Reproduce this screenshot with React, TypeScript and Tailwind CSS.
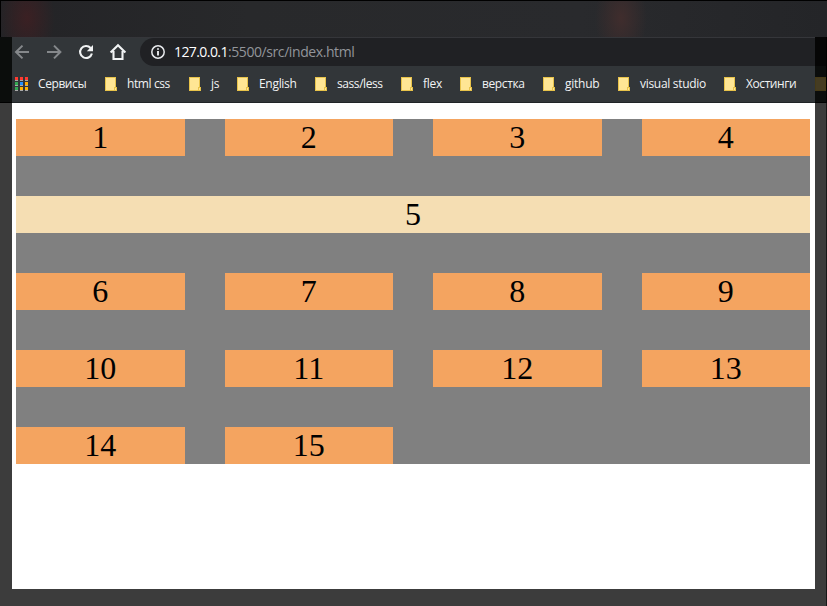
import React from "react";

type Bookmark = { label: string; box: string; text: string };

const bookmarks: Bookmark[] = [
  { label: "html css", box: "w-[84px]", text: "tracking-[-0.4px]" },
  { label: "js", box: "w-12", text: "tracking-[-0.3px]" },
  { label: "English", box: "w-[78px]", text: "tracking-[-0.3px]" },
  { label: "sass/less", box: "w-[86px]", text: "tracking-[-0.42px]" },
  { label: "flex", box: "w-[59px]", text: "tracking-[-0.3px]" },
  { label: "верстка", box: "w-[83px]", text: "tracking-[-0.38px]" },
  { label: "github", box: "w-[75px]", text: "tracking-[-0.25px]" },
  { label: "visual studio", box: "w-[106px]", text: "tracking-[-0.3px]" },
  { label: "Хостинги", box: "w-[91px]", text: "tracking-[-0.42px]" },
];

const appColors = [
  "#ff3b30", "#ff3b30", "#ff3b30",
  "#34a853", "#2090ff", "#ffab00",
  "#34a853", "#ffb300", "#ffb300",
];

function Folder() {
  return (
    <svg width="12" height="14" viewBox="0 0 12 14" className="shrink-0" shapeRendering="crispEdges">
      <path d="M0 0h11v10h1v4H0z" fill="#e8c34a" />
      <path d="M1 1h9v9H9v3H1z" fill="#ffe694" />
      <path d="M10 11h1v2h-1z" fill="#ffe694" />
    </svg>
  );
}

function AppsIcon() {
  return (
    <svg width="13" height="14" viewBox="0 0 13 14" className="shrink-0" shapeRendering="crispEdges">
      {appColors.map((c, i) => {
        const x = (i % 3) * 5;
        const y = Math.floor(i / 3) * 5;
        return (
          <g key={i}>
            <rect x={x} y={y} width="3" height="3" fill={c} />
            <rect x={x} y={y + 3} width="3" height="1" fill="#a9a9a9" />
          </g>
        );
      })}
    </svg>
  );
}

function Toolbar() {
  return (
    <div className="flex h-[28px] items-center">
      <svg width="128" height="28" viewBox="0 0 128 28" fill="none" className="shrink-0">
        <path d="M17 14H4.5M10.5 7.6L4 14L10.5 20.4" stroke="#85888b" strokeWidth="2" />
        <path d="M35 14H48M42 7.6L48.4 14L42 20.4" stroke="#85888b" strokeWidth="2" />
        <path d="M78.6 10A6 6 0 1 0 79.9 15.5" stroke="#f1f3f4" strokeWidth="2.1" />
        <path d="M81 7v6.2h-6.2z" fill="#f1f3f4" />
        <path d="M98.6 14.6L106 7.2L113.4 14.6M101.5 13V21H110.5V13" stroke="#f1f3f4" strokeWidth="2.1" />
      </svg>
      <div className="flex h-[28px] flex-1 items-center rounded-l-full bg-[#202124] pl-[11px]">
        <svg width="14" height="14" viewBox="0 0 14 14" fill="none" className="shrink-0">
          <circle cx="7" cy="7" r="6.2" stroke="#e8eaed" strokeWidth="1.5" />
          <path d="M7 6v4.5M7 3.2v1.6" stroke="#e8eaed" strokeWidth="1.9" />
        </svg>
        <span className="ml-[9px] w-[54px] whitespace-nowrap text-[14px] leading-5 tracking-[-0.58px] text-white">127.0.0.1</span>
        <span className="whitespace-nowrap text-[14px] leading-5 tracking-[-0.42px] text-[#92959a]">:5500/src/index.html</span>
      </div>
    </div>
  );
}

export default function App() {
  return (
    <div className="h-[606px] w-[827px] overflow-hidden bg-[#3c3c3c] font-['Open_Sans','Noto_Sans',sans-serif]">
      <div className="h-[37px] border-t border-l border-black bg-[radial-gradient(ellipse_28px_44px_at_26px_17px,#3b2023,transparent),radial-gradient(ellipse_26px_44px_at_620px_17px,#402d2d,transparent),linear-gradient(90deg,#232326,#28292b_30%,#292a2d_70%,#242528)]" />
      <div className="flex h-[66px]">
        <div className="w-3 border-b border-black bg-[#0b0d0c]" />
        <div className="w-[803px] overflow-hidden border-t border-b border-t-[#35363a] border-b-[#202427] bg-[#323639]">
          <Toolbar />
          <div className="flex h-[36px] items-center pl-[3px] text-[12px] leading-4 text-[#f1f3f4]">
            <div className="flex w-[90px] shrink-0 items-center">
              <AppsIcon />
              <span className="ml-[10px] whitespace-nowrap tracking-[-0.42px]">Сервисы</span>
            </div>
            {bookmarks.map((b) => (
              <div key={b.label} className={`flex shrink-0 items-center ${b.box}`}>
                <Folder />
                <span className={`ml-[10px] whitespace-nowrap ${b.text}`}>{b.label}</span>
              </div>
            ))}
          </div>
        </div>
        <div className="flex w-3 items-end border-r border-b border-black bg-gradient-to-b from-[#060606] from-45% to-[#0b0d0c] to-45% pb-[11px]">
          <div className="h-[14px] w-[11px] border border-[#463a16] bg-[#453c22]" />
        </div>
      </div>
      <div className="flex h-[503px] border-r border-[#171717]">
        <div className="w-3" />
        <div className="h-[486px] w-[803px] bg-white px-1 pt-4">
          <div className="grid w-[794px] grid-cols-4 gap-10 bg-[#808080] text-center font-['Liberation_Serif',serif] text-[32px] leading-[37px] text-black">
            {Array.from({ length: 15 }, (_, i) => i + 1).map((n) => (
              <div key={n} className={n === 5 ? "col-span-4 h-[37px] bg-[#f5deb3]" : "h-[37px] bg-[#f4a460]"}>
                {n}
              </div>
            ))}
          </div>
        </div>
      </div>
    </div>
  );
}
